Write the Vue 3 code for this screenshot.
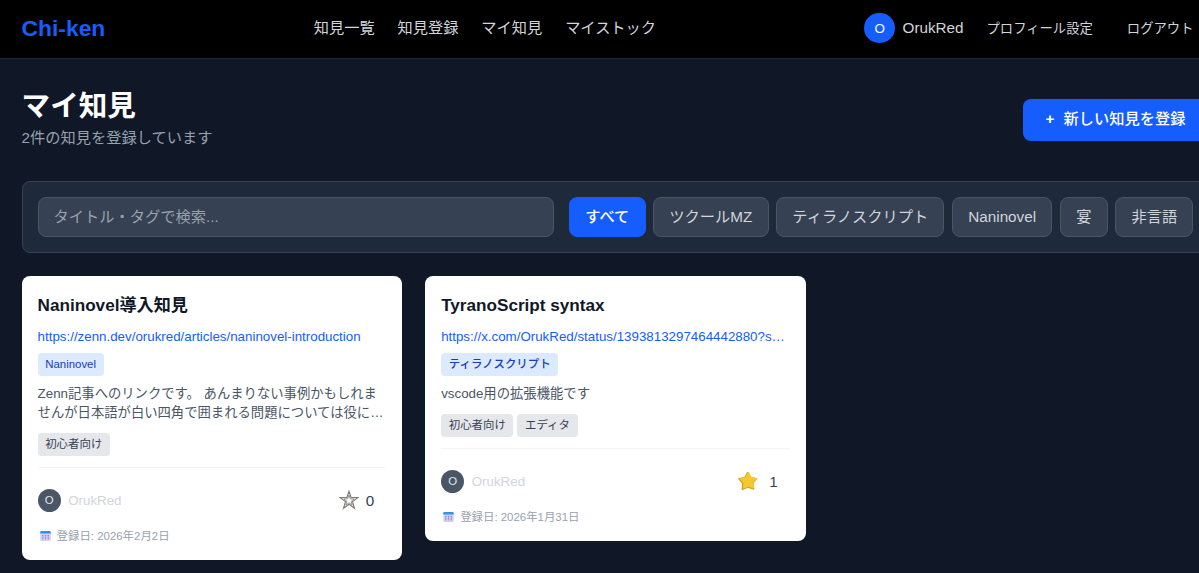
<template>
    <div id="page">
        <header class="header">
            <a class="logo" href="#">Chi-ken</a>
            <nav class="nav">
                <a v-for="item in navItems" :key="item" href="#">{{ item }}</a>
            </nav>
            <div class="user">
                <span class="avatar">O</span>
                <span class="user-name">OrukRed</span>
                <a class="profile" href="#">プロフィール設定</a>
                <button class="logout">ログアウト</button>
            </div>
        </header>

        <main class="main">
            <div class="heading">
                <div>
                    <h1>マイ知見</h1>
                    <p class="count">{{ cards.length }}件の知見を登録しています</p>
                </div>
                <button class="create"><span class="plus">+</span><span>新しい知見を登録</span></button>
            </div>

            <div class="filter">
                <input v-model="keyword" type="text" placeholder="タイトル・タグで検索...">
                <div class="categories">
                    <button
                        v-for="category in categories"
                        :key="category"
                        :class="{ active: category === selected }"
                        @click="selected = category"
                    >{{ category }}</button>
                </div>
            </div>

            <div class="cards">
                <article v-for="card in cards" :key="card.title" class="card">
                    <h2>{{ card.title }}</h2>
                    <a class="link" href="#">{{ card.url }}</a>
                    <div class="row"><span class="badge">{{ card.category }}</span></div>
                    <p class="description">{{ card.description }}</p>
                    <div class="tags">
                        <span v-for="tag in card.tags" :key="tag" class="tag">{{ tag }}</span>
                    </div>
                    <div class="footer">
                        <div class="author">
                            <span class="avatar small">O</span>
                            <span>OrukRed</span>
                        </div>
                        <button class="stock" @click="toggle(card)">
                            <svg v-if="card.stocked" class="star filled" viewBox="0 0 20 20">
                                <path d="M9.6 1.6 L12.4 6.6 L18.6 7.6 L14.9 12.1 L15.7 18 L10 16 L4.3 18.4 L4.8 12.3 L.9 7.8 L6.8 6.7 Z" fill="#d9a01f" stroke="#d9a01f" stroke-width="1.4" stroke-linejoin="round" />
                                <path d="M10.4 1.7 L13.1 6.7 L18.4 7.6 L14.8 11.6 L15.4 16.8 L10.3 14.9 L5.8 16.9 L6 11.7 L2.7 7.8 L7.8 6.7 Z" fill="#f3c832" stroke="#f3c832" stroke-width="1.4" stroke-linejoin="round" />
                            </svg>
                            <svg v-else class="star" viewBox="0 0 20 20">
                                <path d="M10 1.3 L12.1 7.5 L18.9 7.6 L13.5 11.6 L15.5 18.3 L10 14.3 L4.5 18.3 L6.5 11.6 L1.1 7.6 L7.9 7.5 Z" fill="none" stroke="#7d7b79" stroke-width="1.1" />
                                <path d="M10 5 L11.3 8.9 L15.2 9 L12.1 11.3 L13.2 15 L10 12.8 L6.8 15 L7.9 11.3 L4.8 9 L8.7 8.9 Z" fill="#fff" stroke="#8b8987" stroke-width=".9" />
                            </svg>
                            <span class="stock-count">{{ card.stocks }}</span>
                        </button>
                    </div>
                    <div class="date">
                        <svg viewBox="0 0 12 12">
                            <defs>
                                <linearGradient id="sheet" x1="0" y1="0" x2="1" y2="1">
                                    <stop offset="0" stop-color="#b9dcfb" />
                                    <stop offset="1" stop-color="#e6c6f3" />
                                </linearGradient>
                            </defs>
                            <rect x=".3" y=".5" width="11.4" height="11" rx="1.2" fill="url(#sheet)" />
                            <path d="M.3 3.4 V1.7 Q.3 .5 1.5 .5 H10.5 Q11.7 .5 11.7 1.7 V3.4 Z" fill="#3b8fe0" />
                            <path d="M3 5 V9.5 M6 5 V9.5 M9 5 V9.5" stroke="#8b82cf" stroke-width="1.3" stroke-dasharray="1.2 .5" />
                        </svg>
                        <span>登録日: {{ card.date }}</span>
                    </div>
                </article>
            </div>
        </main>
    </div>
</template>

<script setup>
import { ref } from 'vue'

const navItems = ['知見一覧', '知見登録', 'マイ知見', 'マイストック']
const categories = ['すべて', 'ツクールMZ', 'ティラノスクリプト', 'Naninovel', '宴', '非言語']

const keyword = ref('')
const selected = ref('すべて')

const cards = ref([
    {
        title: 'Naninovel導入知見',
        url: 'https://zenn.dev/orukred/articles/naninovel-introduction',
        category: 'Naninovel',
        description: 'Zenn記事へのリンクです。 あんまりない事例かもしれませんが日本語が白い四角で囲まれる問題については役に立つと思います。',
        tags: ['初心者向け'],
        stocks: 0,
        stocked: false,
        date: '2026年2月2日'
    },
    {
        title: 'TyranoScript syntax',
        url: 'https://x.com/OrukRed/status/1393813297464442880?s=20',
        category: 'ティラノスクリプト',
        description: 'vscode用の拡張機能です',
        tags: ['初心者向け', 'エディタ'],
        stocks: 1,
        stocked: true,
        date: '2026年1月31日'
    }
])

const toggle = (card) => {
    card.stocked = !card.stocked
    card.stocks += card.stocked ? 1 : -1
}
</script>

<style>
html,
body {
    margin: 0;
    height: 100%;
    overflow: hidden;
    background: #101726;
}
</style>

<style scoped>
* {
    box-sizing: border-box;
}

#page {
    width: 1231px;
    min-height: 573px;
    background: #101726;
    color: #d1d5dc;
    font-family: "Liberation Sans", "Noto Sans CJK JP", sans-serif;
    font-size: 15.24px;
    line-height: 23px;
}

h1,
h2,
p {
    margin: 0;
}

a {
    color: inherit;
    text-decoration: none;
}

button,
input {
    font: inherit;
    color: inherit;
    border: none;
    margin: 0;
}

button {
    padding: 0;
    background: none;
    white-space: nowrap;
}

.header {
    display: flex;
    justify-content: space-between;
    align-items: center;
    height: 59px;
    padding: 0 21.5px 2px;
    background: #000;
    border-bottom: 1px solid #1e2939;
}

.logo {
    color: #155dfc;
    font-size: 22.86px;
    font-weight: bold;
}

.nav {
    display: flex;
    gap: 22.86px;
    padding-bottom: 2px;
}

.user {
    display: flex;
    align-items: center;
}

.avatar {
    display: flex;
    justify-content: center;
    align-items: center;
    width: 30.5px;
    height: 30.5px;
    border-radius: 50%;
    background: #155dfc;
    color: #fff;
    font-size: 13.33px;
}

.user-name {
    margin: 0 23px 0 7.6px;
    padding-bottom: 2px;
}

.profile,
.logout {
    font-size: 13.33px;
}

.logout {
    margin-left: 18px;
    padding: 0 16px;
}

.main {
    padding: 30px 21.6px 0;
}

.heading {
    display: flex;
    justify-content: space-between;
    align-items: center;
    height: 62px;
}

h1 {
    color: #fff;
    font-size: 28.57px;
    font-weight: bold;
    line-height: 34px;
}

.count {
    color: #99a1af;
    margin-top: 3px;
    padding-bottom: 3px;
}

.create {
    display: flex;
    align-items: center;
    gap: 9px;
    height: 42px;
    padding: 0 24px 3px 22.8px;
    border-radius: 8px;
    background: #155dfc;
    color: #fff;
    font-weight: 500;
}

.plus {
    font-weight: bold;
}

.filter {
    display: flex;
    gap: 15.24px;
    height: 72px;
    margin-top: 30px;
    padding: 15px;
    border: 1px solid #364153;
    border-radius: 8px;
    background: #1e2939;
}

.filter input {
    flex: 1;
    min-width: 0;
    padding: 0 15px 2px;
    border: 1px solid #4a5565;
    border-radius: 8px;
    background: #364153;
}

.filter input::placeholder {
    color: #99a1af;
    opacity: 1;
}

.categories {
    display: flex;
    gap: 7.6px;
}

.categories button {
    padding: 0 15.24px 2px;
    border: 1px solid #4a5565;
    border-radius: 8px;
    background: #364153;
}

.categories .active {
    border-color: #155dfc;
    background: #155dfc;
    color: #fff;
    font-weight: 500;
}

.cards {
    display: grid;
    grid-template-columns: repeat(3, 1fr);
    align-items: start;
    gap: 22.86px;
    margin-top: 23px;
}

.card {
    min-width: 0;
    padding: 16px;
    border-radius: 8px;
    background: #fff;
}

h2 {
    color: #101828;
    font-size: 17.14px;
    font-weight: 600;
    line-height: 27px;
}

.link {
    display: block;
    margin-top: 8px;
    overflow: hidden;
    color: #155dfc;
    font-size: 13.33px;
    line-height: 19px;
    text-overflow: ellipsis;
    white-space: nowrap;
}

.row {
    display: flex;
    margin-top: 7px;
}

.badge,
.tag {
    height: 23px;
    padding: 0 7.6px;
    border-radius: 4px;
    font-size: 11.43px;
    line-height: 23px;
}

.badge {
    background: #dbeafe;
    color: #193cb8;
    font-weight: 500;
}

.description {
    display: -webkit-box;
    margin-top: 8px;
    overflow: hidden;
    color: #4a5565;
    font-size: 13.33px;
    line-height: 19px;
    -webkit-box-orient: vertical;
    -webkit-line-clamp: 2;
}

.tags {
    display: flex;
    gap: 4px;
    margin-top: 11px;
    padding-bottom: 11px;
    border-bottom: 1px solid #f3f4f6;
}

.tag {
    background: #e5e7eb;
    color: #364153;
}

.footer {
    display: flex;
    justify-content: space-between;
    align-items: center;
    height: 23px;
    margin-top: 21px;
}

.author {
    display: flex;
    align-items: center;
    gap: 7.6px;
    color: #d1d5dc;
    font-size: 13.33px;
}

.avatar.small {
    width: 23px;
    height: 23px;
    background: #4a5565;
    color: #e5e7eb;
    font-size: 11.43px;
}

.stock {
    display: flex;
    align-items: center;
    padding: 0 12px 1px 0;
    color: #364153;
}

.star {
    width: 20px;
    height: 20px;
    margin-right: 7px;
}

.star.filled {
    margin-right: 11px;
}

.date {
    display: flex;
    align-items: center;
    gap: 6px;
    height: 16px;
    margin-top: 16px;
    padding-left: 2px;
    color: #99a1af;
    font-size: 11.43px;
    line-height: 16px;
}

.date svg {
    width: 11px;
    height: 12px;
}
</style>
